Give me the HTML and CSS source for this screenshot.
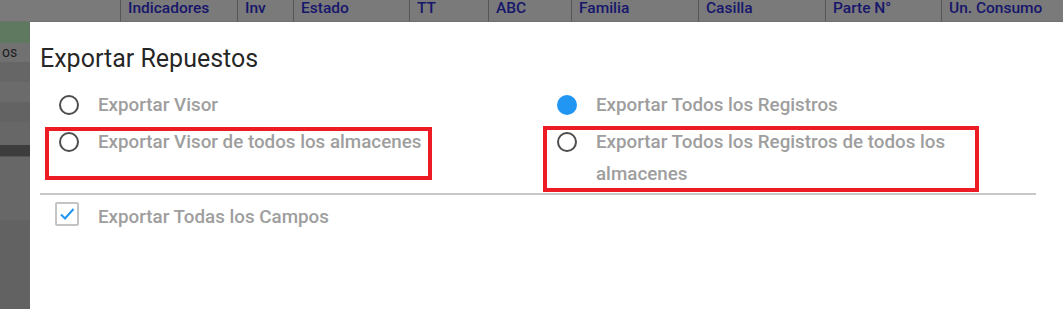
FILE: index.html
```html
<!DOCTYPE html>
<html lang="es">
<head>
    <meta charset="UTF-8">
    <meta name="viewport" content="width=device-width, initial-scale=1.0">
    <title>Exportar Repuestos</title>
    <link rel="stylesheet" href="styles.css">
</head>
<body>
    <!-- Table header behind the dialog (dimmed by the overlay) -->
    <div class="grid-header">
        <div class="col" style="width: 121px;"></div>
        <div class="col" style="width: 117px;">Indicadores</div>
        <div class="col" style="width: 56px;">Inv</div>
        <div class="col" style="width: 116px;">Estado</div>
        <div class="col" style="width: 79px;">TT</div>
        <div class="col" style="width: 83px;">ABC</div>
        <div class="col" style="width: 127px;">Familia</div>
        <div class="col" style="width: 127px;">Casilla</div>
        <div class="col" style="width: 116px;">Parte N°</div>
        <div class="col last">Un. Consumo</div>
    </div>

    <div class="page-body">
        <!-- Strip of the table that shows at the left of the dialog -->
        <div class="side-strip">
            <div class="strip-row green"></div>
            <div class="strip-row text">os</div>
            <div class="strip-row s1"></div>
            <div class="strip-row s2"></div>
            <div class="strip-row s3"></div>
            <div class="strip-row s4"></div>
            <div class="strip-row dark"></div>
            <div class="strip-row s5"></div>
            <div class="strip-row s6"></div>
        </div>

        <!-- Export dialog -->
        <div class="dialog">
            <h2 class="dialog-title">Exportar Repuestos</h2>

            <div class="options">
                <div class="option-col">
                    <label class="option">
                        <span class="radio"></span>
                        <span class="label">Exportar Visor</span>
                    </label>
                    <label class="option">
                        <span class="radio"></span>
                        <span class="label">Exportar Visor de todos los almacenes</span>
                    </label>
                </div>
                <div class="option-col">
                    <label class="option">
                        <span class="radio checked"></span>
                        <span class="label">Exportar Todos los Registros</span>
                    </label>
                    <label class="option">
                        <span class="radio"></span>
                        <span class="label narrow">Exportar Todos los Registros de todos los almacenes</span>
                    </label>
                </div>
            </div>

            <div class="divider"></div>

            <label class="option check-row">
                <span class="checkbox">
                    <svg width="20" height="20" viewBox="0 0 20 20">
                        <path d="M4 10.5 L8 14.5 L16.5 5" fill="none" stroke="#2196f3" stroke-width="2"/>
                    </svg>
                </span>
                <span class="label">Exportar Todas los Campos</span>
            </label>

            <!-- Red annotation boxes drawn over the dialog -->
            <div class="mark mark-left"></div>
            <div class="mark mark-right"></div>
        </div>
    </div>
</body>
</html>
```

FILE: styles.css
```css
/* Base page */
body, html {
    margin: 0;
    padding: 0;
    height: 100%;
    overflow: hidden;
    font-family: 'Roboto', 'Liberation Sans', sans-serif;
    background: #6b6b6b;
}

/* Dimmed table header */
.grid-header {
    display: flex;
    height: 22px;
    background: #7a7a7a;
    border-bottom: 1px solid #707070;
    box-sizing: border-box;
}

.grid-header .col {
    flex: none;
    box-sizing: border-box;
    border-right: 1px solid #555;
    padding-left: 7px;
    font-size: 15.5px;
    font-weight: 500;
    line-height: 16px;
    color: #16166b;
    white-space: nowrap;
    overflow: hidden;
}

.grid-header .col.last {
    flex: 1;
    border-right: none;
}

/* Everything under the header */
.page-body {
    display: flex;
    height: calc(100% - 22px);
}

.side-strip {
    width: 30px;
    flex: none;
    display: flex;
    flex-direction: column;
    background: #616161;
    overflow: hidden;
}

.strip-row {
    height: 20px;
    background: #686868;
}

.strip-row.green { height: 21px; background: #5f7860; }
.strip-row.text {
    height: 19px;
    background: #717171;
    color: #1e1e1e;
    font-size: 14px;
    line-height: 19px;
    padding-left: 2px;
}
.strip-row.s1 { background: #666; }
.strip-row.s2 { background: #6b6b6b; }
.strip-row.s3 { background: #636363; }
.strip-row.s4 { height: 23px; background: #676767; }
.strip-row.dark { height: 11px; background: #3d3d3d; border-bottom: 1px solid #555; }
.strip-row.s5 { height: 63px; background: #676767; }
.strip-row.s6 { flex: 1; background: #626262; }

/* Dialog */
.dialog {
    position: relative;
    flex: 1;
    background: #fff;
    padding: 0 27px 0 10px;
}

.dialog-title {
    margin: 0;
    padding-top: 22px;
    font-size: 25px;
    font-weight: 400;
    line-height: 30px;
    color: rgba(0, 0, 0, 0.87);
}

.options {
    display: flex;
    padding-top: 15px;
}

.option-col {
    flex: 1;
    display: flex;
    flex-direction: column;
    gap: 5px;
}

.option {
    display: flex;
    align-items: flex-start;
    padding-left: 19px;
}

.label {
    font-size: 18.8px;
    font-weight: 500;
    line-height: 32px;
    color: #9e9e9e;
    padding-left: 19px;
}

.label.narrow {
    max-width: 380px;
}

/* Radio buttons */
.radio {
    flex: none;
    width: 20px;
    height: 20px;
    margin-top: 6px;
    box-sizing: border-box;
    border: 2px solid #4d4d4d;
    border-radius: 50%;
}

.radio.checked {
    border-color: #2196f3;
    background: #2196f3;
}

.divider {
    height: 2px;
    background: #c8c8c8;
    margin-top: 3px;
}

/* Checkbox row */
.check-row {
    padding-left: 15px;
    padding-top: 7px;
}

.checkbox {
    flex: none;
    width: 24px;
    height: 24px;
    box-sizing: border-box;
    border: 2px solid #c4c4c4;
    border-radius: 2px;
    display: flex;
    align-items: center;
    justify-content: center;
}

.check-row .label {
    padding-left: 19px;
    line-height: 32px;
    margin-top: -1px;
}

/* Red annotation rectangles */
.mark {
    position: absolute;
    box-sizing: border-box;
    border: 4px solid #ed1c24;
}

.mark-left {
    left: 15px;
    top: 105px;
    width: 387px;
    height: 53px;
}

.mark-right {
    left: 513px;
    top: 104px;
    width: 436px;
    height: 66px;
}
```
